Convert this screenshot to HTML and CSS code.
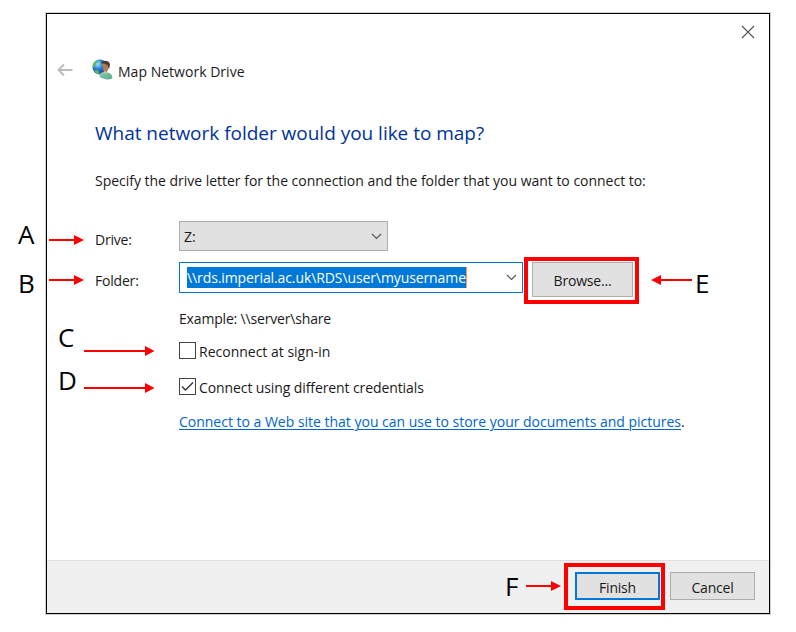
FILE: index.html
```html
<!DOCTYPE html>
<html lang="en">
<head>
<meta charset="utf-8">
<title>Map Network Drive</title>
<link rel="stylesheet" href="styles.css">
</head>
<body>
<main class="dialog">
  <div class="titlebar">
    <svg class="close" width="14" height="14" viewBox="0 0 14 14"><path d="M1 1l12 12M13 1L1 13"/></svg>
  </div>
  <header class="header">
    <svg class="back" width="16" height="14" viewBox="0 0 16 14"><path d="M15.500 7H1.500M7 1.500L1.500 7 7 12.500"/></svg>
    <svg class="logo" width="21" height="21" viewBox="0 0 21 21">
      <defs>
        <radialGradient id="globe" cx=".35" cy=".3" r=".75"><stop offset="0" stop-color="#9be4f8"/><stop offset=".45" stop-color="#277fd0"/><stop offset="1" stop-color="#10308c"/></radialGradient>
        <linearGradient id="shirt" x2="1" y2="1"><stop offset="0" stop-color="#8fcbb2"/><stop offset="1" stop-color="#58ac8f"/></linearGradient>
      </defs>
      <circle cx="8" cy="8" r="7.500" fill="url(#globe)"/>
      <path d="M1 5C2 3 3 2 5 1.500L5.500 3 3.500 5 3 8 1 8.500C.5 7 .6 6 1 5zM2.500 11l4 .5 1 3.500C5 15 3 13.500 2.500 11z" fill="#62b955"/>
      <path d="M7.500 18l1-4 4-1.500 5 1.500c2 1 3.200 3 2.700 5.500-4 1.600-8.500 1-12.700-1.500z" fill="url(#shirt)"/>
      <path d="M11.500 11l1.500 4 2.500-2-.5-3z" fill="#e5bd98"/>
      <path d="M10 4.500c1-2 6.500-2 7 1l-1 5.500c-1 2-3.500 2-4.500.5z" fill="#b57d55"/>
      <path d="M9 4.500C9.500.8 17.500.5 18 5.500l-1 5-1.500-4.500-4-1.500z" fill="#4b3c33"/>
    </svg>
    <span class="title">Map Network Drive</span>
  </header>
  <section class="content">
    <h1 class="heading">What network folder would you like to map?</h1>
    <p class="intro">Specify the drive letter for the connection and the folder that you want to connect to:</p>
    <div class="form">
      <span class="label">Drive:</span>
      <div class="select"><span class="value">Z:</span><svg class="chevron" width="11" height="7" viewBox="0 0 11 7"><path d="M1 1l4.500 4.500L10 1"/></svg></div>
      <span class="label">Folder:</span>
      <div class="folder-row">
        <div class="combo"><span class="selected">\\rds.imperial.ac.uk\RDS\user\myusername</span><svg class="chevron" width="11" height="7" viewBox="0 0 11 7"><path d="M1 1l4.500 4.500L10 1"/></svg></div>
        <div class="button browse">Browse...</div>
      </div>
    </div>
    <div class="options">
      <p class="example">Example: \\server\share</p>
      <div class="check"><span class="box"></span><span class="reconnect">Reconnect at sign-in</span></div>
      <div class="check"><span class="box"><svg width="15" height="15" viewBox="0 0 15 15"><path d="M2 7.500l3.500 3.500 7.500-7.500"/></svg></span><span class="credentials">Connect using different credentials</span></div>
      <p class="weblink"><a>Connect to a Web site that you can use to store your documents and pictures</a>.</p>
    </div>
  </section>
  <footer class="footer">
    <div class="button finish">Finish</div>
    <div class="button cancel">Cancel</div>
  </footer>
</main>
<div class="highlight highlight-browse"></div>
<div class="highlight highlight-finish"></div>
<span class="letter a">A</span><span class="letter b">B</span><span class="letter c">C</span>
<span class="letter d">D</span><span class="letter e">E</span><span class="letter f">F</span>
<svg class="arrows" width="796" height="632" viewBox="0 0 796 632">
  <path class="shaft" d="M49 240H75M49 280H75M84 351H146M84 388H146M692 280H660M526 586H552"/>
  <path class="head" d="M74 235l10 5-10 5zM74 275l10 5-10 5zM145 346l9.500 5-9.500 5zM145 383l9.500 5-9.500 5zM661 275l-10 5 10 5zM551 581l10 5-10 5z"/>
</svg>
</body>
</html>
```
FILE: styles.css
```css
* { box-sizing: border-box; }
body {
  margin: 0;
  position: relative;
  width: 796px;
  height: 632px;
  overflow: hidden;
  background: #fff;
  color: #1a1a1a;
  font: 14px/20px "Open Sans", sans-serif;
  white-space: nowrap;
}
p, h1 { margin: 0; }
svg { display: block; fill: none; flex: none; }
.dialog {
  display: flex;
  flex-direction: column;
  width: 724px;
  height: 601px;
  margin: 13px 0 0 46px;
  border: 1px solid #000;
  box-shadow: 0 0 0 1px #d0d0d0;
}
.titlebar { display: flex; justify-content: flex-end; align-items: center; height: 36px; padding-right: 14px; }
.close { stroke: #555; stroke-width: 1.1; }
.header { display: flex; align-items: center; height: 41px; padding-left: 10px; }
.back { stroke: #bdbdbd; stroke-width: 2; margin-top: -1px; }
.logo { margin: -2px 5px 0 19px; }
.title { letter-spacing: .02px; padding-top: 2px; }
.content { flex: 1; padding-left: 48px; }
.heading {
  margin: 27px 0 0;
  color: #003399;
  font-size: 19px;
  font-weight: 400;
  line-height: 30px;
  letter-spacing: -.02px;
}
.intro { margin: 23px 0 0; letter-spacing: -.02px; }
.form {
  display: grid;
  grid-template-columns: 84px 1fr;
  grid-template-rows: 30px 35px;
  row-gap: 11px;
  margin-top: 30px;
}
.label { padding-top: 9px; letter-spacing: -.2px; }
.select, .combo { display: flex; align-items: center; justify-content: space-between; }
.select { width: 209px; padding: 0 5px 0 4px; border: 1px solid #adadad; background: #e1e1e1; }
.value { padding-top: 2px; }
.chevron { stroke: #555; stroke-width: 1.2; }
.folder-row { display: flex; gap: 9px; }
.combo { width: 344px; height: 31px; padding: 0 5px 0 7px; border: 1px solid #0078d7; }
.selected { height: 21px; background: #0078d7; color: #fff; border-right: 1px solid #ff9a45; letter-spacing: -.1px; line-height: 21px; }
.button {
  display: flex;
  align-items: center;
  justify-content: center;
  border: 1px solid #adadad;
  background: #e1e1e1;
  letter-spacing: -.2px;
}
.browse { width: 101px; height: 35px; padding-top: 2px; }
.options { padding: 12px 0 0 84px; }
.example { letter-spacing: -.17px; }
.check { display: flex; align-items: center; gap: 4px; height: 20px; margin-top: 13px; }
.check + .check { margin-top: 16px; }
.box { width: 17px; height: 17px; border: 1px solid #444; margin: -3px -1px 0 0; }
.box svg { stroke: #333; stroke-width: 1.4; }
.credentials { letter-spacing: -.1px; }
.weblink { margin-top: 14px; letter-spacing: -.01px; }
.weblink a { color: #0066cc; text-decoration: underline; text-decoration-thickness: 1px; text-underline-offset: 2px; }
.footer {
  display: flex;
  gap: 10px;
  justify-content: flex-end;
  height: 53px;
  padding: 11px 14px 0 0;
  border-top: 1px solid #dfdfdf;
  background: #f0f0f0;
}
.finish, .cancel { width: 85px; height: 28px; padding-top: 3px; }
.finish { border: 2px solid #0078d7; }
.highlight { position: absolute; border: 4px solid #f00; }
.highlight-browse { left: 524px; top: 257px; width: 115px; height: 47px; }
.highlight-finish { left: 564px; top: 563px; width: 101px; height: 47px; }
.letter { position: absolute; color: #000; font-size: 26px; line-height: 30px; }
.a { left: 18px; top: 219px; }
.b { left: 18px; top: 268px; }
.c { left: 58px; top: 322px; }
.d { left: 58px; top: 365px; }
.e { left: 695px; top: 268px; }
.f { left: 505px; top: 571px; }
.arrows { position: absolute; left: 0; top: 0; }
.shaft { stroke: #f00; stroke-width: 2; }
.head { fill: #f00; }
```
